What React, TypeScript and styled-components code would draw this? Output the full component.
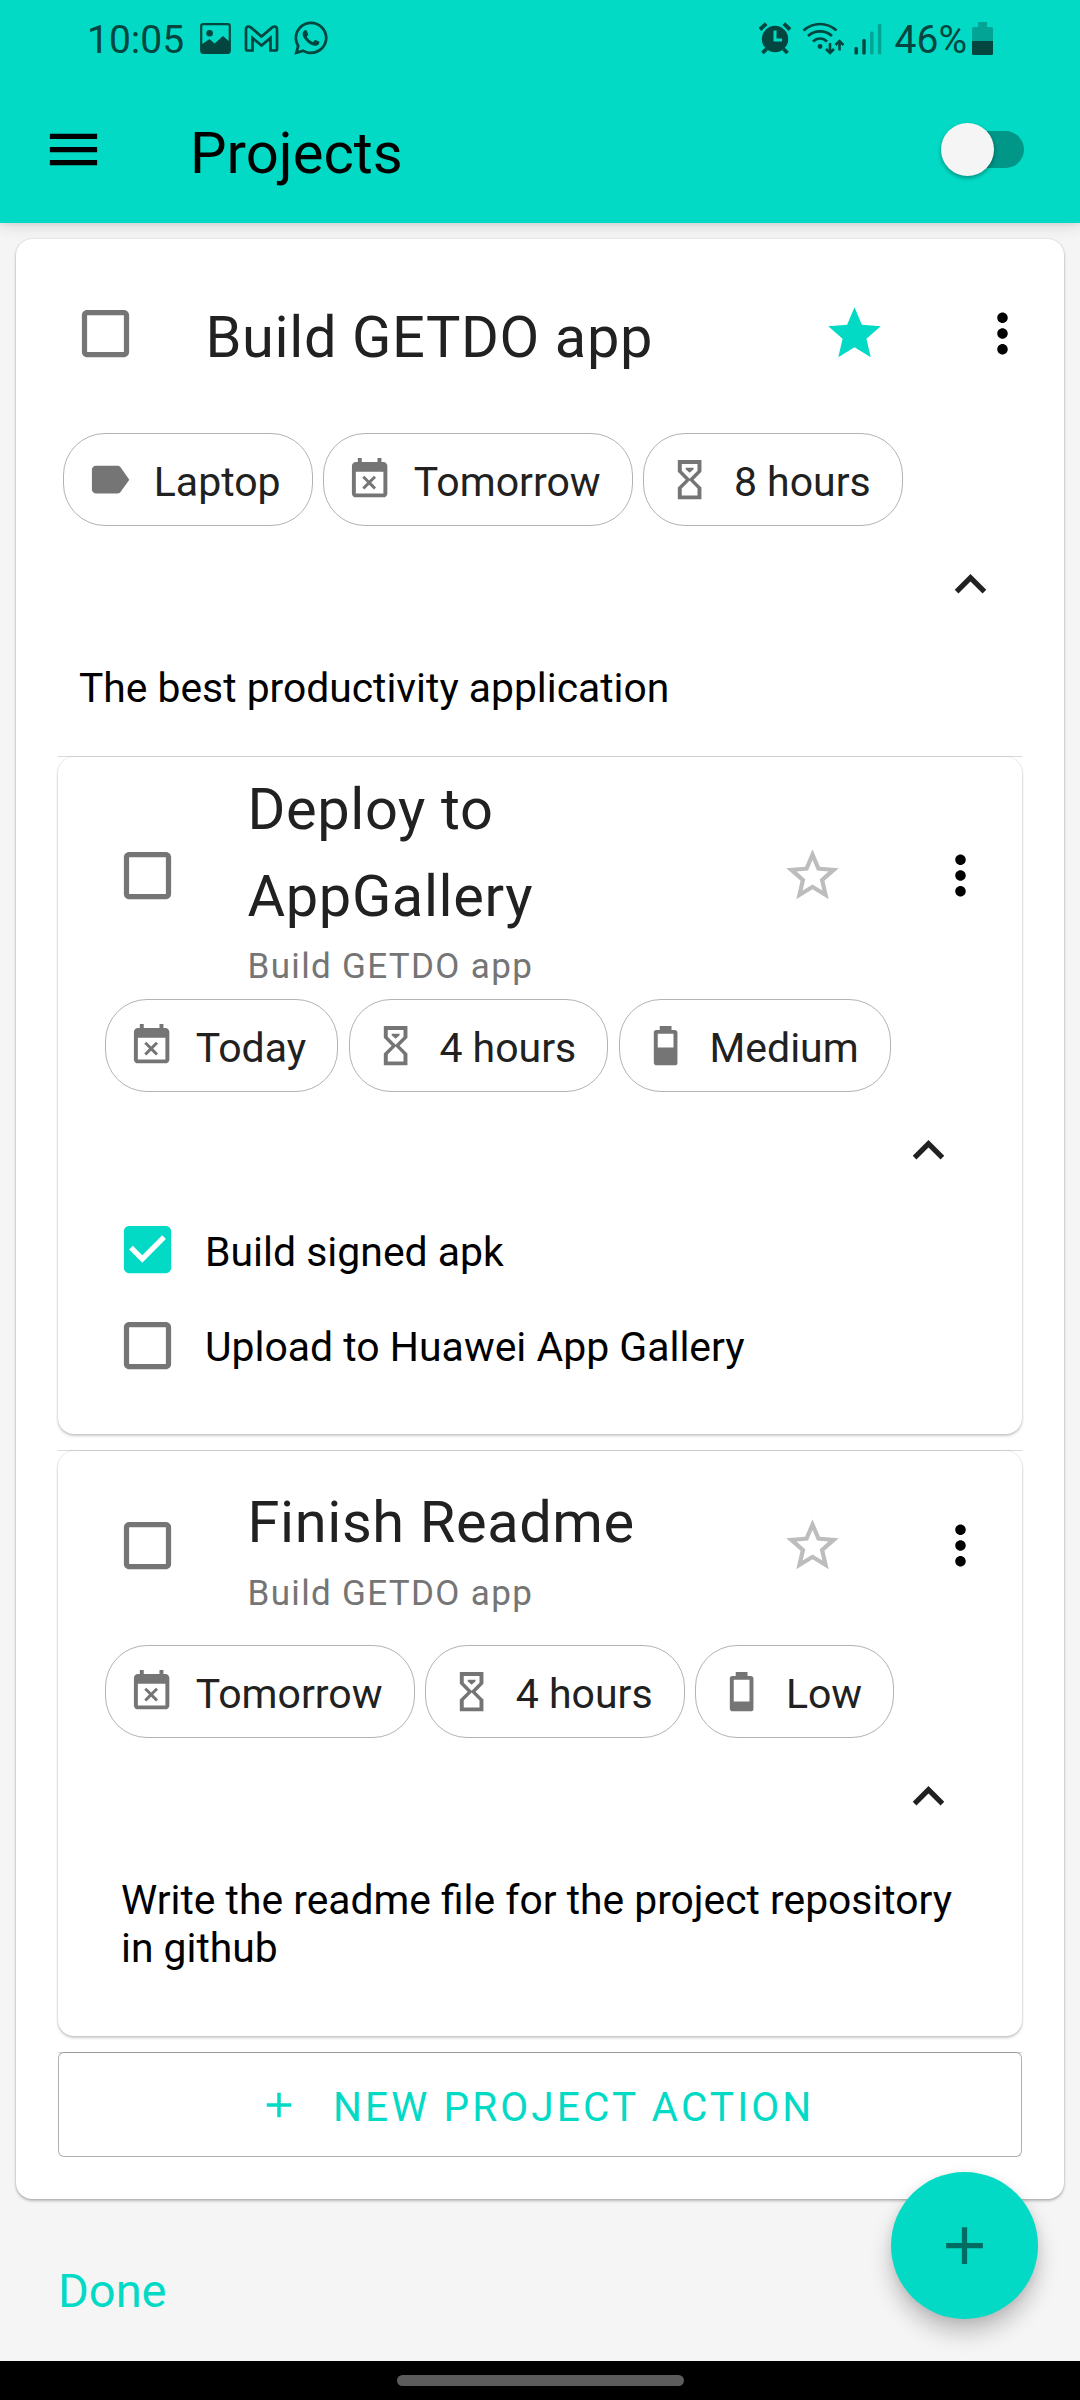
import React from "react";
import styled, { createGlobalStyle } from "styled-components";
import { FaWhatsapp } from "react-icons/fa";

const TEAL = "#03dac5";
const INK = "#212121";
const GREY = "#757575";
const STATUS = "#02463f";

const GlobalStyle = createGlobalStyle`
  *, *::before, *::after { box-sizing: border-box; }
  body { margin: 0; background: #f5f5f5; }
  svg { display: block; flex: none; }
`;

const Screen = styled.div`
  position: relative;
  display: flex;
  flex-direction: column;
  width: 1080px;
  height: 2400px;
  overflow: hidden;
  background: #f5f5f5;
  font-family: Roboto, "Liberation Sans", sans-serif;
  color: #000;
`;

const Header = styled.header`
  flex: none;
  height: 223px;
  background: ${TEAL};
  box-shadow: 0 2px 4px rgba(0, 0, 0, 0.06), 0 4px 14px rgba(0, 0, 0, 0.1);
`;

const StatusBar = styled.div`
  display: flex;
  justify-content: space-between;
  height: 76px;
  padding: 0 87px 0 87px;
  color: ${STATUS};
`;

const StatusGroup = styled.div<{ $gap: number }>`
  display: flex;
  align-items: center;
  gap: ${(p) => p.$gap}px;
`;

const StatusText = styled.span<{ $before?: number; $after: number }>`
  font-size: 39px;
  line-height: 76px;
  margin: 3px ${(p) => p.$after}px 0 ${(p) => p.$before ?? 0}px;
`;

const Toolbar = styled.div`
  display: flex;
  align-items: center;
  height: 147px;
  padding: 0 56px 0 42px;
`;

const ToolbarTitle = styled.h1`
  flex: 1;
  margin: 6px 0 0 85px;
  font-size: 58px;
  line-height: 76px;
  font-weight: 400;
`;

const SwitchTrack = styled.div`
  display: flex;
  align-items: center;
  width: 74px;
  height: 37px;
  border-radius: 19px;
  background: #009688;
`;

const SwitchKnob = styled.div`
  flex: none;
  width: 53px;
  height: 53px;
  margin-left: -9px;
  border-radius: 50%;
  background: #f5f5f5;
  box-shadow: 0 2px 4px rgba(0, 0, 0, 0.35);
`;

const Card = styled.section<{ $nested?: boolean }>`
  display: flex;
  flex-direction: column;
  border-radius: 16px;
  background: #fff;
  box-shadow: 0 0 2px rgba(0, 0, 0, ${(p) => (p.$nested ? 0.16 : 0.2)}),
    0 2px 3px rgba(0, 0, 0, ${(p) => (p.$nested ? 0.2 : 0.24)});
`;

const ProjectCard = styled(Card)`
  flex: none;
  margin: 16px 16px 0;
  height: 1960px;
`;

const CardHeader = styled.div`
  display: flex;
  align-items: center;
  min-height: 189px;
  margin-bottom: 5px;
  padding: 0 30px 0 58px;
`;

const Headings = styled.div<{ $plain: boolean }>`
  flex: 1;
  min-width: 0;
  margin: ${(p) => (p.$plain ? 7 : 9)}px 0 0 68.5px;
  padding-right: 30px;
`;

const Title = styled.h2`
  margin: 0;
  font-size: 57.75px;
  line-height: 86.5px;
  font-weight: 400;
  letter-spacing: 0.62px;
  color: ${INK};
`;

const Subtitle = styled.div`
  font-size: 35px;
  line-height: 55px;
  letter-spacing: 1.34px;
  color: ${GREY};
`;

const StarSlot = styled.div`
  margin-right: 85px;
`;

const ChipRow = styled.div`
  display: flex;
  gap: 10.5px;
  padding-left: 47px;
`;

const ChipBox = styled.div`
  display: flex;
  align-items: center;
  height: 93px;
  padding: 0 31px 0 22px;
  border: 1px solid #b3b3b3;
  border-radius: 42px;
`;

const ChipLabel = styled.span`
  margin: 5px 0 0 20.5px;
  font-size: 41px;
  line-height: 48px;
  white-space: nowrap;
  color: ${INK};
`;

const ChevronRow = styled.div`
  display: flex;
  justify-content: flex-end;
  height: 110px;
  padding: 27px 62px 0 0;
`;

const Description = styled.p<{ $bottom: number }>`
  margin: 0;
  padding: 28px 50px ${(p) => p.$bottom}px 63px;
  font-size: 40.8px;
  line-height: 48px;
`;

const Checklist = styled.div`
  padding: 0 0 41px 58px;
`;

const CheckRow = styled.div`
  display: flex;
  align-items: center;
  gap: 26px;
  height: 95.5px;
  font-size: 40.95px;
`;

const CheckLabel = styled.span`
  margin-top: 4px;
  line-height: 48px;
`;

const Nested = styled.div`
  display: flex;
  flex-direction: column;
  gap: 16px;
  padding: 0 42px;
`;

const NestedItem = styled.div`
  border-top: 1px solid #d9d9d9;
`;

const ActionButton = styled.button`
  display: flex;
  align-items: center;
  width: 100%;
  height: 105px;
  margin: -1px 0 0;
  padding: 1px 0 0 199px;
  border: 1px solid #b0b0b0;
  border-top-color: #999;
  border-radius: 6px;
  background: #fff;
  font-family: inherit;
  font-size: 40.6px;
  letter-spacing: 3.1px;
  color: ${TEAL};
`;

const ActionLabel = styled.span`
  margin: 4px 0 0 33px;
  line-height: 48px;
  white-space: nowrap;
`;

const DoneLabel = styled.div`
  flex: 1;
  padding: 62px 0 0 58px;
  font-size: 47px;
  line-height: 60px;
  color: ${TEAL};
`;

const Fab = styled.button`
  position: absolute;
  right: 42px;
  bottom: 81px;
  display: flex;
  align-items: center;
  justify-content: center;
  width: 147px;
  height: 147px;
  padding: 0;
  border: 0;
  border-radius: 50%;
  background: ${TEAL};
  box-shadow: 0 14px 22px rgba(0, 0, 0, 0.22), 0 2px 10px rgba(0, 0, 0, 0.08);
`;

const NavBar = styled.div`
  display: flex;
  justify-content: center;
  flex: none;
  height: 39px;
  padding-top: 14px;
  background: #000;
`;

const NavPill = styled.div`
  width: 287px;
  height: 11px;
  border-radius: 6px;
  background: #5c5c5c;
`;

const paths = {
  menu: "M3 18h18v-2H3v2zm0-5h18v-2H3v2zm0-7v2h18V6H3z",
  box: "M19 5v14H5V5h14m0-2H5c-1.1 0-2 .9-2 2v14c0 1.1.9 2 2 2h14c1.1 0 2-.9 2-2V5c0-1.1-.9-2-2-2z",
  boxChecked:
    "M19 3H5c-1.11 0-2 .9-2 2v14c0 1.1.89 2 2 2h14c1.11 0 2-.9 2-2V5c0-1.1-.89-2-2-2zm-9 14l-5-5 1.41-1.41L10 14.17l7.59-7.59L19 8l-9 9z",
  star: "M12 17.27L18.18 21l-1.64-7.03L22 9.24l-7.19-.61L12 2 9.19 8.63 2 9.24l5.46 4.73L5.82 21z",
  starOutline:
    "M22 9.24l-7.19-.62L12 2 9.19 8.63 2 9.24l5.46 4.73L5.82 21 12 17.27 18.18 21l-1.63-7.03L22 9.24zM12 15.4l-3.76 2.27 1-4.28-3.32-2.88 4.38-.38L12 6.1l1.71 4.04 4.38.38-3.32 2.88 1 4.28L12 15.4z",
  more: "M12 8c1.1 0 2-.9 2-2s-.9-2-2-2-2 .9-2 2 .9 2 2 2zm0 2c-1.1 0-2 .9-2 2s.9 2 2 2 2-.9 2-2-.9-2-2-2zm0 6c-1.1 0-2 .9-2 2s.9 2 2 2 2-.9 2-2-.9-2-2-2z",
  up: "M12 8l-6 6 1.41 1.41L12 10.83l4.59 4.58L18 14z",
  add: "M19 13h-6v6h-2v-6H5v-2h6V5h2v6h6v2z",
  label:
    "M17.63 5.84C17.27 5.33 16.67 5 16 5L5 5.01C3.9 5.01 3 5.9 3 7v10c0 1.1.9 1.99 2 1.99L16 19c.67 0 1.27-.33 1.63-.84L22 12l-4.37-6.16z",
  date: "M9.31 17l2.44-2.44L14.19 17l1.06-1.06-2.44-2.44 2.44-2.44L14.19 10l-2.44 2.44L9.31 10l-1.06 1.06 2.44 2.44-2.44 2.44L9.31 17zM19 3h-1V1h-2v2H8V1H6v2H5c-1.11 0-1.99.9-1.99 2L3 19c0 1.1.89 2 2 2h14c1.1 0 2-.9 2-2V5c0-1.1-.9-2-2-2zm0 16H5V8h14v11z",
  time: "M6 2v6l4 4-4 4v6h12v-6l-4-4 4-4V2H6zm10 14.5V20H8v-3.5l4-4 4 4zm-4-5l-4-4V4h8v3.5l-4 4zM10 6h4v.7l-2 1.8-2-1.8z",
  medium:
    "M16 13H8V6h8m.67-2H15V2H9v2H7.33A1.33 1.33 0 0 0 6 5.33v15.34C6 21.4 6.6 22 7.33 22h9.34A1.33 1.33 0 0 0 18 20.67V5.33C18 4.6 17.4 4 16.67 4z",
  low: "M16 17H8V6h8m.67-2H15V2H9v2H7.33A1.33 1.33 0 0 0 6 5.33v15.34C6 21.4 6.6 22 7.33 22h9.34A1.33 1.33 0 0 0 18 20.67V5.33C18 4.6 17.4 4 16.67 4z",
};

type IconName = keyof typeof paths;

const Icon = ({ name, size = 63, color = "#000" }: { name: IconName; size?: number; color?: string }) => (
  <svg width={size} height={size} viewBox="0 0 24 24" fill={color}>
    <path d={paths[name]} />
  </svg>
);

const PictureIcon = () => (
  <svg width="31" height="31" viewBox="0 0 31 31">
    <rect x="1.2" y="1.2" width="28.6" height="28.6" rx="2" fill="none" stroke={STATUS} strokeWidth="2.2" />
    <circle cx="9.6" cy="10.2" r="3.3" fill={STATUS} />
    <path d="M1.5 21.5l8-5.5 5 4.5 8.5-7.5 6.8 6V28q0 1.5-1.5 1.5H3Q1.5 29.5 1.5 28z" fill={STATUS} />
  </svg>
);

const MailIcon = () => (
  <svg width="35" height="27" viewBox="0 0 34 27" fill="none" stroke={STATUS} strokeWidth="2.7">
    <path d="M1.5 4.5Q1.5 1.5 4 1.5 5.3 1.5 6.3 2.4L17 11.5 27.7 2.4Q28.7 1.5 30 1.5 32.5 1.5 32.5 4.5V24Q32.5 25.5 31 25.5H26V13L17 20.5 8 13V25.5H3Q1.5 25.5 1.5 24Z" />
  </svg>
);

const AlarmIcon = () => (
  <svg width="34" height="34" viewBox="0 0 34 34">
    <circle cx="17" cy="18" r="13.2" fill={STATUS} />
    <path d="M2 8.5L8.2 2.6M32 8.5L25.8 2.6M4.5 32l4-4M29.5 32l-4-4" stroke={STATUS} strokeWidth="3.8" />
    <path d="M17 9.5v9.5h7" fill="none" stroke={TEAL} strokeWidth="3" />
  </svg>
);

const WifiIcon = () => (
  <svg width="42" height="34" viewBox="0 0 42 34" fill="none" stroke={STATUS} strokeWidth="2.7">
    <path d="M1.5 9.5Q9 3 18 3t16.5 6.5M6 15Q11 10.3 18 10.3T30 15M11 20.5q3-3 7-3t7 3" />
    <circle cx="18" cy="25.5" r="2.4" fill={STATUS} stroke="none" />
    <path d="M28 22v9M24 28l4 4 4-4M37.5 29.5v-9M33.5 24l4-4 4 4" strokeWidth="2.6" />
  </svg>
);

const SignalIcon = () => (
  <svg width="28" height="34" viewBox="0 0 28 34">
    <rect x="0.5" y="26" width="3.4" height="7.5" rx="1.3" fill={STATUS} />
    <rect x="8.3" y="18" width="3.4" height="15.5" rx="1.3" fill={STATUS} />
    <rect x="16.1" y="10.5" width="3.4" height="23" rx="1.3" fill="#02a495" />
    <rect x="23.9" y="3" width="3.4" height="30.5" rx="1.3" fill="#02a495" />
  </svg>
);

const BatteryIcon = () => (
  <svg width="21" height="33" viewBox="0 0 21 33">
    <path d="M6 0h9v5h4.5Q21 5 21 6.5V19H0V6.5Q0 5 1.5 5H6z" fill="#02a495" />
    <path d="M0 19h21v12.5q0 1.5-1.5 1.5h-18Q0 33 0 31.5z" fill={STATUS} />
  </svg>
);

type ChipData = { icon: IconName; text: string };

type TaskHeadProps = { title: string; parent?: string; starred?: boolean; chips: ChipData[] };

const TaskHead = ({ title, parent, starred, chips }: TaskHeadProps) => (
  <>
    <CardHeader>
      <Icon name="box" color={GREY} />
      <Headings $plain={!parent}>
        <Title>{title}</Title>
        {parent && <Subtitle>{parent}</Subtitle>}
      </Headings>
      <StarSlot>
        <Icon name={starred ? "star" : "starOutline"} color={starred ? TEAL : "#bdbdbd"} />
      </StarSlot>
      <Icon name="more" />
    </CardHeader>
    <ChipRow>
      {chips.map((chip) => (
        <ChipBox key={chip.text}>
          <Icon name={chip.icon} size={47.25} color={GREY} />
          <ChipLabel>{chip.text}</ChipLabel>
        </ChipBox>
      ))}
    </ChipRow>
    <ChevronRow>
      <Icon name="up" color={INK} />
    </ChevronRow>
  </>
);

const steps = [
  { text: "Build signed apk", done: true },
  { text: "Upload to Huawei App Gallery", done: false },
];

export default function App() {
  return (
    <Screen>
      <GlobalStyle />
      <Header>
        <StatusBar>
          <StatusGroup $gap={13}>
            <StatusText $after={3}>10:05</StatusText>
            <PictureIcon />
            <MailIcon />
            <FaWhatsapp size={38} />
          </StatusGroup>
          <StatusGroup $gap={10}>
            <AlarmIcon />
            <WifiIcon />
            <SignalIcon />
            <StatusText $before={3} $after={-5}>
              46%
            </StatusText>
            <BatteryIcon />
          </StatusGroup>
        </StatusBar>
        <Toolbar>
          <Icon name="menu" />
          <ToolbarTitle>Projects</ToolbarTitle>
          <SwitchTrack>
            <SwitchKnob />
          </SwitchTrack>
        </Toolbar>
      </Header>

      <ProjectCard>
        <TaskHead
          title="Build GETDO app"
          starred
          chips={[
            { icon: "label", text: "Laptop" },
            { icon: "date", text: "Tomorrow" },
            { icon: "time", text: "8 hours" },
          ]}
        />
        <Description $bottom={44}>The best productivity application</Description>
        <Nested>
          <NestedItem>
            <Card $nested>
              <TaskHead
                title="Deploy to AppGallery"
                parent="Build GETDO app"
                chips={[
                  { icon: "date", text: "Today" },
                  { icon: "time", text: "4 hours" },
                  { icon: "medium", text: "Medium" },
                ]}
              />
              <Checklist>
                {steps.map((step) => (
                  <CheckRow key={step.text}>
                    <Icon name={step.done ? "boxChecked" : "box"} color={step.done ? TEAL : GREY} />
                    <CheckLabel>{step.text}</CheckLabel>
                  </CheckRow>
                ))}
              </Checklist>
            </Card>
          </NestedItem>
          <NestedItem>
            <Card $nested>
              <TaskHead
                title="Finish Readme"
                parent="Build GETDO app"
                chips={[
                  { icon: "date", text: "Tomorrow" },
                  { icon: "time", text: "4 hours" },
                  { icon: "low", text: "Low" },
                ]}
              />
              <Description $bottom={64}>Write the readme file for the project repository in github</Description>
            </Card>
          </NestedItem>
          <NestedItem>
            <ActionButton>
              <Icon name="add" size={42} color={TEAL} />
              <ActionLabel>NEW PROJECT ACTION</ActionLabel>
            </ActionButton>
          </NestedItem>
        </Nested>
      </ProjectCard>

      <DoneLabel>Done</DoneLabel>

      <NavBar>
        <NavPill />
      </NavBar>

      <Fab>
        <Icon name="add" color="#016d62" />
      </Fab>
    </Screen>
  );
}
